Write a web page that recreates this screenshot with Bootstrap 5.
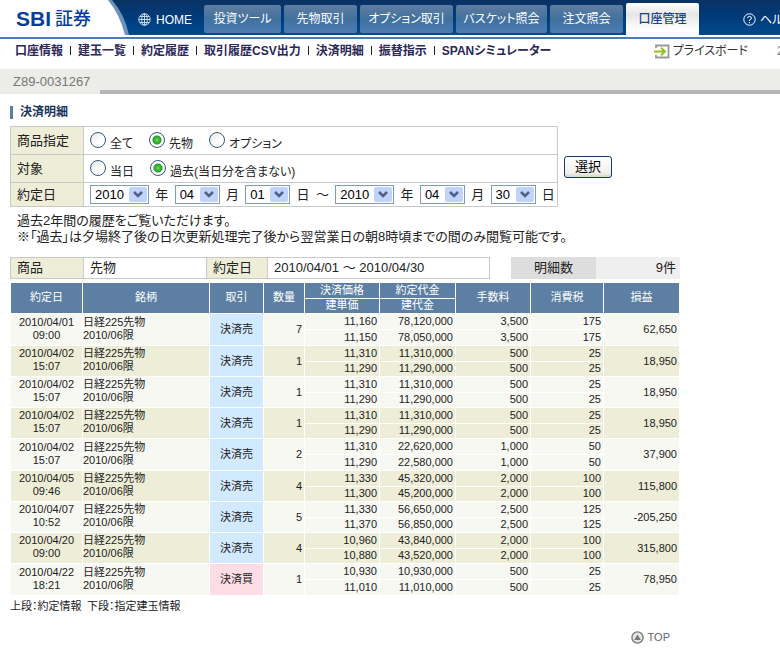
<!DOCTYPE html>
<html lang="ja">
<head>
<meta charset="utf-8">
<meta name="viewport" content="width=device-width, initial-scale=1">
<title>SBI証券 - 決済明細</title>
<link href="https://cdn.jsdelivr.net/npm/bootstrap@5.3.0/dist/css/bootstrap.min.css" rel="stylesheet">
<style>
body{font-family:"Liberation Sans","Noto Sans CJK JP",sans-serif;font-feature-settings:"palt";font-size:13px;line-height:16px;color:#222;background:#fff;overflow-x:hidden}
a{color:inherit;text-decoration:none}
.topbar{height:35px;background:linear-gradient(#0a3263,#003a78 45%,#004a8f);overflow:hidden}
.brand{width:129px;position:relative}
.brand svg{position:absolute;left:0;top:0}
.brand-name{position:relative;padding-left:16px;gap:4px;color:#0a3c9c;font-size:18px;line-height:38px;white-space:nowrap}
.brand-name b{font-size:21px}
.brand-name span{font-weight:500}
.home{width:75px;padding-left:9px;gap:5px;color:#fff;font-size:12px}
.tabs-row{gap:3px}
.tab{height:28px;margin-top:5px;border-radius:2px;background:linear-gradient(#5f7d9f,#42719f 50%,#4b7cb2);color:#fff;font-size:12px;line-height:29px;text-align:center;white-space:nowrap}
.tab-on{height:32px;margin-top:3px;border-radius:2px 2px 0 0;background:linear-gradient(#fff,#e6e6e6 35%,#fff 85%);color:#1b4478;line-height:33px;font-weight:500}
.w74{width:73px}.w78{width:77px}.w92{width:91px}.w94{width:93px}
.helplink{color:#fff;margin-left:44px;gap:4px;white-space:nowrap;font-size:12px}
.rule{height:2px;background:#4a7cb5;margin-top:2px}
.subnav{height:30px;padding:0 0 6px 15px;font-size:12px;font-weight:700;color:#2c2757;white-space:nowrap;overflow:hidden}
.subnav .item+.item::before{content:"";display:inline-block;width:1px;height:9px;background:#222;margin:0 7px}
.board{font-weight:400;color:#333;font-size:12px;gap:3px;margin-right:29px}
.cutoff{width:3px;overflow:hidden;font-weight:400;color:#777}
.acct{background:#ecece8;height:25px;color:#777}
.acct .num{width:100px;padding-left:13px;line-height:25px}
.acct .strip{border-bottom:4px solid #b5b5b5}
.content-area{max-width:670px;margin-left:10px}
.heading{font-size:12px;line-height:13px;font-weight:700;color:#16355c;border-left:3px solid #5b7fa6;padding-left:7px;margin:12px 0 7px}
.cond{width:548px;border-collapse:collapse}
.cond th,.cond td,.summary th,.summary td{border:1px solid #c8cac8;padding:0 6px;font-weight:400}
.cond th,.summary th{background:#eeeed8}
.cond th{width:73px}
.cond td:last-child{padding-right:2px}
.cond tr{height:28px}.cond tr:last-child{height:24px}
.cond label{padding-top:6px;line-height:18px;font-size:12px}
.radio{appearance:none;width:16px;height:16px;margin:3px 4px 0 0;border:1px solid #31597f;border-radius:50%;background:linear-gradient(135deg,#e4e4e0,#fff 60%)}
.radio:checked{background:radial-gradient(circle,#6ade5e 0,#1f9e1c 4px,#fff 5px)}
.sel{appearance:none;height:19px;border:1px solid #7f9db9;border-radius:0;padding:0 0 0 4px;font-size:13px;line-height:16px;color:#000;background:#fff url("data:image/svg+xml,%3Csvg xmlns='http://www.w3.org/2000/svg' width='18' height='15'%3E%3Crect width='18' height='15' rx='2' fill='%23c1d2fb'/%3E%3Cpath d='M5 5l4 4 4-4' fill='none' stroke='%234d6185' stroke-width='2.5'/%3E%3C/svg%3E") no-repeat right 1px center}
.sel-y{width:59px}.sel-m{width:45px}
.gobtn{width:48px;height:22px;margin-left:6px;border:1px solid #123c6c;border-radius:3px;background:linear-gradient(#fff,#f1f0eb 80%,#d8d4c8);font-size:13px;line-height:18px;padding:0;color:#000}
.notes{margin:6px 0 0 7px;white-space:nowrap}
.summary{width:480px;height:22px;border-collapse:collapse}
.count{height:22px;width:169px;line-height:22px}
.count dt{width:85px;background:#ddd;font-weight:400;text-align:center}
.count dd{background:#efefef;text-align:right;padding-right:4px}
.c-goods{width:123px}.c-date{width:61px}.c-head{width:73px}
.detail{width:100%;table-layout:fixed;border-collapse:separate;border-spacing:1px;font-size:11px;line-height:13px;margin-top:3px}
.detail th,.detail td{padding:0 2px;height:14px}
.detail th{background:#5c7fa3;color:#fff;font-weight:400;text-align:center;line-height:12px;padding-bottom:2px}
.detail .half{height:15px}
.detail tbody:nth-of-type(4n+1) .half2{height:15px}
.detail td{background:#f8f8f2;text-align:right}
.detail tbody:nth-of-type(even) td{background:#eeeed8}
.detail .half,.detail .half2{line-height:12px;padding-bottom:2px}
.detail td.when{text-align:center;padding:0 0 2px}
.detail td.name{text-align:left;padding:0 0 2px}
.detail tbody td.kind{background:#d2eaff;text-align:center}
.detail tbody td.kind.buy{background:#ffdde6}
.foot{font-size:11px;line-height:14px;margin-top:3px}
.totop{font-size:11px;color:#666;gap:4px;margin:16px 10px 0 0}
</style>
<script src="https://cdn.jsdelivr.net/npm/bootstrap@5.3.0/dist/js/bootstrap.bundle.min.js"></script>
</head>
<body>
<header>
<nav class="topbar d-flex">
  <a href="#" class="brand flex-shrink-0">
    <svg width="129" height="35" aria-hidden="true"><path d="M0 0H112Q125 15 129 35H0Z" fill="#6c93bb"/><path d="M0 0H108Q120 15 125 35H0Z" fill="#fff"/></svg>
    <div class="brand-name d-flex"><b>SBI</b><span>証券</span></div>
  </a>
  <a href="#" class="home d-flex align-items-center flex-shrink-0 pt-1">
    <svg width="13" height="13" viewBox="0 0 13 13" fill="none" stroke="#c7d9ec" aria-hidden="true"><circle cx="6.5" cy="6.5" r="5.7"/><ellipse cx="6.5" cy="6.5" rx="2.8" ry="5.7"/><path d="M6.5 1v11M1 6.5h11M2 3.5h9M2 9.5h9"/></svg>HOME</a>
  <div class="tabs-row d-flex flex-shrink-0">
    <a href="#" class="tab w78">投資ツール</a><a href="#" class="tab w74">先物取引</a><a href="#" class="tab w94">オプション取引</a><a href="#" class="tab w92">バスケット照会</a><a href="#" class="tab w74">注文照会</a><a href="#" class="tab tab-on w74" aria-current="page">口座管理</a>
  </div>
  <a href="#" class="helplink d-flex align-items-center flex-shrink-0 pt-1"><svg width="13" height="13" viewBox="0 0 13 13" fill="none" stroke="#fff" aria-hidden="true"><circle cx="6.5" cy="6.5" r="5.7"/><path d="M4.5 5.2Q4.7 3.4 6.5 3.4T8.5 5.1Q8.5 6 6.5 7V8M6.5 9v1.2"/></svg>ヘル</a>
</nav>
<div class="rule"></div>
<nav class="subnav d-flex align-items-center">
  <a href="#" class="item">口座情報</a><a href="#" class="item">建玉一覧</a><a href="#" class="item">約定履歴</a><a href="#" class="item">取引履歴CSV出力</a><a href="#" class="item">決済明細</a><a href="#" class="item">振替指示</a><a href="#" class="item">SPANシミュレーター</a>
  <a href="#" class="board d-flex align-items-center ms-auto"><svg width="16" height="15" viewBox="0 0 16 15" fill="none" aria-hidden="true"><path d="M2 4V1.5H14.5V13.5H2V11" stroke="#999" stroke-width="1.8"/><path d="M0 7.5H10M7 3.8l4 3.7-4 3.7" stroke="#95c11f" stroke-width="2"/></svg>プライスボード</a><span class="cutoff">2</span>
</nav>
<div class="acct d-flex"><div class="num">Z89-0031267</div><div class="strip flex-grow-1"></div></div>
</header>
<main class="content-area">
<h1 class="heading">決済明細</h1>
<form>
<div class="d-flex align-items-center">
<table class="cond">
  <tr><th scope="row">商品指定</th><td><div class="d-flex">
    <input class="radio" type="radio" name="goods" id="g1"><label for="g1" class="me-3">全て</label>
    <input class="radio" type="radio" name="goods" id="g2" checked><label for="g2" class="me-3">先物</label>
    <input class="radio" type="radio" name="goods" id="g3"><label for="g3">オプション</label></div></td></tr>
  <tr><th scope="row">対象</th><td><div class="d-flex">
    <input class="radio" type="radio" name="term" id="t1"><label for="t1" class="me-3">当日</label>
    <input class="radio" type="radio" name="term" id="t2" checked><label for="t2">過去(当日分を含まない)</label></div></td></tr>
  <tr><th scope="row">約定日</th><td><div class="d-flex align-items-center justify-content-between">
    <select class="sel sel-y" aria-label="開始年"><option>2010</option></select><span>年</span>
    <select class="sel sel-m" aria-label="開始月"><option>04</option></select><span>月</span>
    <select class="sel sel-m" aria-label="開始日"><option>01</option></select><span>日</span>
    <span>～</span>
    <select class="sel sel-y" aria-label="終了年"><option>2010</option></select><span>年</span>
    <select class="sel sel-m" aria-label="終了月"><option>04</option></select><span>月</span>
    <select class="sel sel-m" aria-label="終了日"><option>30</option></select><span>日</span></div></td></tr>
</table>
<button type="button" class="gobtn">選択</button>
</div>
</form>
<div class="notes">過去2年間の履歴をご覧いただけます。<br>※「過去」は夕場終了後の日次更新処理完了後から翌営業日の朝8時頃までの間のみ閲覧可能です。</div>
<div class="d-flex justify-content-between mt-2 pt-1">
  <table class="summary"><colgroup><col class="c-head"><col class="c-goods"><col class="c-date"><col></colgroup>
    <tr><th scope="row">商品</th><td>先物</td><th scope="row">約定日</th><td>2010/04/01 ～ 2010/04/30</td></tr></table>
  <dl class="count d-flex mb-0"><dt>明細数</dt><dd class="flex-grow-1 mb-0">9件</dd></dl>
</div>
<table class="detail" id="detail">
  <colgroup><col style="width:71px"><col style="width:126px"><col style="width:53px"><col style="width:40px"><col style="width:74px"><col style="width:75px"><col style="width:74px"><col style="width:72px"><col></colgroup>
  <thead>
  <tr><th rowspan="2">約定日</th><th rowspan="2">銘柄</th><th rowspan="2">取引</th><th rowspan="2">数量</th><th class="half">決済価格</th><th class="half">約定代金</th><th rowspan="2">手数料</th><th rowspan="2">消費税</th><th rowspan="2">損益</th></tr>
  <tr><th>建単価</th><th>建代金</th></tr>
  </thead>
</table>
<div class="foot">上段：約定情報&ensp;下段：指定建玉情報</div>
<a href="#" class="totop d-flex align-items-center justify-content-end"><svg width="13" height="13" viewBox="0 0 13 13" aria-hidden="true"><circle cx="6.5" cy="6.5" r="5.6" fill="#e4e4e4" stroke="#777" stroke-width="1.3"/><path d="M6.5 3.5L9.8 9H3.2Z" fill="#777"/></svg>TOP</a>
</main>
<script>
// date, time, quantity, price pair, amount pair, fee, tax, profit, side
const records = [
  ['2010/04/01','09:00',7,'11,160','11,150','78,120,000','78,050,000','3,500','175','62,650','売'],
  ['2010/04/02','15:07',1,'11,310','11,290','11,310,000','11,290,000','500','25','18,950','売'],
  ['2010/04/02','15:07',1,'11,310','11,290','11,310,000','11,290,000','500','25','18,950','売'],
  ['2010/04/02','15:07',1,'11,310','11,290','11,310,000','11,290,000','500','25','18,950','売'],
  ['2010/04/02','15:07',2,'11,310','11,290','22,620,000','22,580,000','1,000','50','37,900','売'],
  ['2010/04/05','09:46',4,'11,330','11,300','45,320,000','45,200,000','2,000','100','115,800','売'],
  ['2010/04/07','10:52',5,'11,330','11,370','56,650,000','56,850,000','2,500','125','-205,250','売'],
  ['2010/04/20','09:00',4,'10,960','10,880','43,840,000','43,520,000','2,000','100','315,800','売'],
  ['2010/04/22','18:21',1,'10,930','11,010','10,930,000','11,010,000','500','25','78,950','買']
];
document.getElementById('detail').insertAdjacentHTML('beforeend', records.map(
  ([date, time, qty, p1, p2, a1, a2, fee, tax, profit, side]) => `<tbody>
  <tr><td rowspan="2" class="when">${date}<br>${time}</td><td rowspan="2" class="name">日経225先物<br>2010/06限</td>
  <td rowspan="2" class="kind ${side === '買' ? 'buy' : ''}">決済${side}</td><td rowspan="2">${qty}</td>
  <td class="half">${p1}</td><td class="half">${a1}</td><td class="half">${fee}</td><td class="half">${tax}</td><td rowspan="2">${profit}</td></tr>
  <tr><td class="half2">${p2}</td><td class="half2">${a2}</td><td class="half2">${fee}</td><td class="half2">${tax}</td></tr></tbody>`).join(''));
</script>
</body>
</html>
